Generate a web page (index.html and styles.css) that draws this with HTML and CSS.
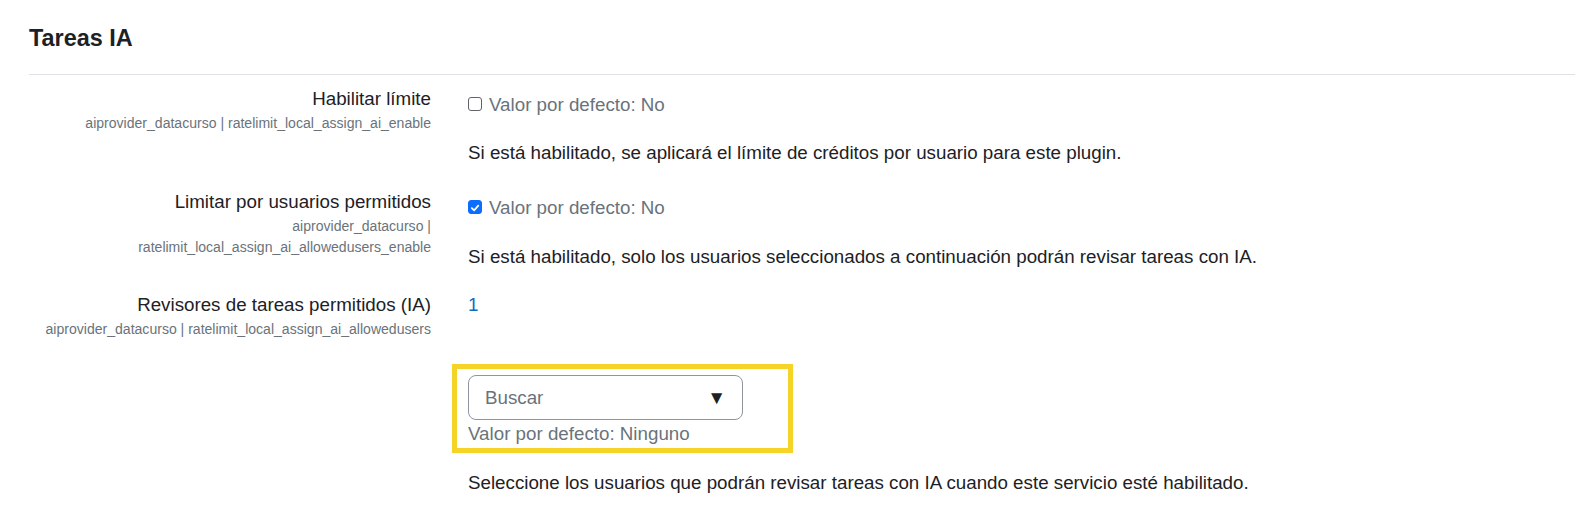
FILE: index.html
```html
<!DOCTYPE html>
<html lang="es">
<head>
<meta charset="utf-8">
<link rel="stylesheet" href="styles.css">
</head>
<body>
<main class="page">
  <h2 class="section-title">Tareas IA</h2>
  <hr class="divider">
  <div class="setting">
    <div class="label-col">
      <div class="label">Habilitar límite</div>
      <div class="key">aiprovider_datacurso | ratelimit_local_assign_ai_enable</div>
    </div>
    <div class="content-col">
      <div class="default-line"><span class="cb"></span><span class="default">Valor por defecto: No</span></div>
      <p class="desc">Si está habilitado, se aplicará el límite de créditos por usuario para este plugin.</p>
    </div>
  </div>
  <div class="setting">
    <div class="label-col">
      <div class="label">Limitar por usuarios permitidos</div>
      <div class="key">aiprovider_datacurso |<br>ratelimit_local_assign_ai_allowedusers_enable</div>
    </div>
    <div class="content-col">
      <div class="default-line"><span class="cb checked"><svg viewBox="0 0 14 14" width="14" height="14"><path d="M3.3 7.2 L6 9.8 L10.8 4.2" fill="none" stroke="#fff" stroke-width="2" stroke-linecap="round" stroke-linejoin="round"/></svg></span><span class="default">Valor por defecto: No</span></div>
      <p class="desc desc-2">Si está habilitado, solo los usuarios seleccionados a continuación podrán revisar tareas con IA.</p>
    </div>
  </div>
  <div class="setting">
    <div class="label-col">
      <div class="label">Revisores de tareas permitidos (IA)</div>
      <div class="key">aiprovider_datacurso | ratelimit_local_assign_ai_allowedusers</div>
    </div>
    <div class="content-col">
      <div class="count">1</div>
      <div class="highlight">
        <div class="select"><span class="placeholder">Buscar</span><span class="arrow">▼</span></div>
        <div class="default">Valor por defecto: Ninguno</div>
      </div>
      <p class="desc desc-3">Seleccione los usuarios que podrán revisar tareas con IA cuando este servicio esté habilitado.</p>
    </div>
  </div>
</main>
</body>
</html>
```

FILE: styles.css
```css
html, body {
  margin: 0;
  padding: 0;
  background: #fff;
}
body {
  font-family: "Liberation Sans", Arial, sans-serif;
  color: #1d2125;
  font-size: 18.75px;
  line-height: 28px;
}
.page {
  padding: 24px 0 0 29px;
}
.section-title {
  margin: 0;
  font-size: 23.4375px;
  font-weight: 700;
  line-height: 29px;
}
.divider {
  margin: 21px 0 0 0;
  border: 0;
  border-top: 1px solid #dee2e6;
}
.setting {
  display: grid;
  grid-template-columns: 402px 1fr;
  column-gap: 36px;
  margin-top: 10px;
}
.setting + .setting {
  margin-top: 21px;
}
.setting + .setting + .setting {
  margin-top: 20px;
}
.label-col {
  text-align: right;
}
.label {
  line-height: 28px;
}
.key {
  font-size: 14.0625px;
  line-height: 21px;
  color: #6a737b;
  margin-top: 0;
}
.content-col {
  padding-left: 1px;
}
.default-line {
  display: flex;
  align-items: center;
  gap: 7px;
  margin-top: 6px;
  height: 28px;
}
.cb {
  flex: none;
  width: 14px;
  height: 14px;
  box-sizing: border-box;
  border: 1px solid #5f6468;
  border-radius: 3px;
  background: #fff;
  display: inline-flex;
  margin-top: -3px;
}
.cb.checked {
  background: #0d6efd;
  border-color: #0d6efd;
}
.default {
  color: #6a737b;
}
.desc {
  margin: 20px 0 0 0;
}
.desc-2 {
  margin-top: 21px;
}
.count {
  color: #0f6cbf;
}
.highlight {
  margin: 45px 0 0 -16px;
  width: 320px;
  height: 73px;
  border: 5px solid #f5d327;
  padding: 6px 0 0 11px;
}
.select {
  width: 275px;
  height: 45px;
  box-sizing: border-box;
  border: 1px solid #8f959e;
  border-radius: 8px;
  display: flex;
  align-items: center;
  justify-content: space-between;
  padding: 0 16px 0 16px;
}
.placeholder {
  color: #6a737b;
}
.arrow {
  font-size: 19px;
  color: #1d2125;
}
.highlight .default {
  line-height: 28px;
  margin-top: 0;
}
.desc-3 {
  margin-top: 16px;
}
```
